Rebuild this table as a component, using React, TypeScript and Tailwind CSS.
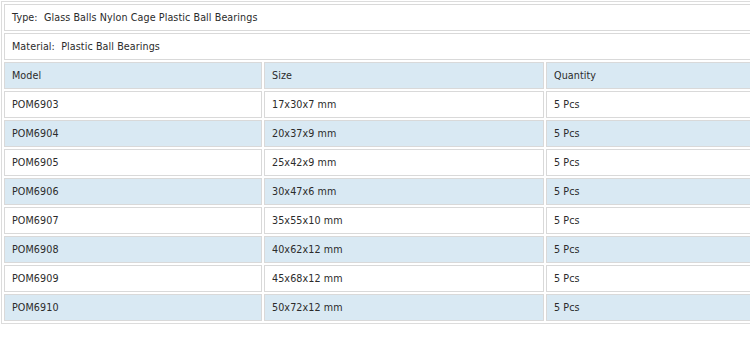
import React from "react";

const rows = [
  ["POM6903", "17x30x7 mm", "5 Pcs"],
  ["POM6904", "20x37x9 mm", "5 Pcs"],
  ["POM6905", "25x42x9 mm", "5 Pcs"],
  ["POM6906", "30x47x6 mm", "5 Pcs"],
  ["POM6907", "35x55x10 mm", "5 Pcs"],
  ["POM6908", "40x62x12 mm", "5 Pcs"],
  ["POM6909", "45x68x12 mm", "5 Pcs"],
  ["POM6910", "50x72x12 mm", "5 Pcs"],
];

const cell =
  "h-[27px] border border-[#d9d9d9] px-[7px] py-0 align-middle text-left font-normal whitespace-nowrap";

export default function App() {
  return (
    <div
      className="w-[750px] h-[351px] overflow-hidden bg-white p-[1px] text-[#2b2b2b] text-[9.6px] tracking-[0.08px] leading-none"
      style={{ fontFamily: '"DejaVu Sans", Verdana, sans-serif' }}
    >
      <table className="w-[805px] table-fixed border-separate border-spacing-[2px] border border-[#dcdcdc]">
        <colgroup>
          <col className="w-[258px]" />
          <col className="w-[280px]" />
          <col />
        </colgroup>
        <tbody>
          <tr>
            <td colSpan={3} className={`${cell} bg-white`}>
              Type:&nbsp; Glass Balls Nylon Cage Plastic Ball Bearings
            </td>
          </tr>
          <tr>
            <td colSpan={3} className={`${cell} bg-white`}>
              Material:&nbsp; Plastic Ball Bearings
            </td>
          </tr>
          <tr>
            <td className={`${cell} bg-[#d9e9f3]`}>Model</td>
            <td className={`${cell} bg-[#d9e9f3]`}>Size</td>
            <td className={`${cell} bg-[#d9e9f3]`}>Quantity</td>
          </tr>
          {rows.map((r, i) => (
            <tr key={r[0]}>
              {r.map((c, j) => (
                <td
                  key={j}
                  className={`${cell} ${i % 2 === 1 ? "bg-[#d9e9f3]" : "bg-white"}`}
                >
                  {c}
                </td>
              ))}
            </tr>
          ))}
        </tbody>
      </table>
    </div>
  );
}
